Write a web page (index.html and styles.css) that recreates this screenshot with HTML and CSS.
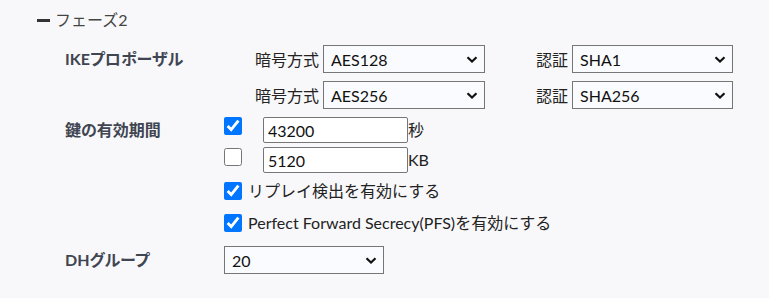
FILE: index.html
```html
<!DOCTYPE html>
<html lang="ja">
<head>
    <meta charset="UTF-8">
    <meta name="viewport" content="width=device-width, initial-scale=1.0">
    <title>フェーズ2</title>
    <link rel="stylesheet" href="styles.css">
</head>
<body>
    <div class="phase">
        <div class="phase-title"><span class="toggle"></span>フェーズ2</div>

        <div class="field">
            <div class="field-label">IKEプロポーザル</div>
            <div class="field-body proposals">
                <div class="proposal">
                    <span class="pair-label">暗号方式</span>
                    <span class="select-wrap sel-enc">
                        <select><option>AES128</option></select>
                        <svg class="chevron" viewBox="0 0 12 7"><path d="M1.5 1.2l4.5 4.3 4.5-4.3"/></svg>
                    </span>
                    <span class="pair-label auth">認証</span>
                    <span class="select-wrap sel-auth">
                        <select><option>SHA1</option></select>
                        <svg class="chevron" viewBox="0 0 12 7"><path d="M1.5 1.2l4.5 4.3 4.5-4.3"/></svg>
                    </span>
                </div>
                <div class="proposal">
                    <span class="pair-label">暗号方式</span>
                    <span class="select-wrap sel-enc">
                        <select><option>AES256</option></select>
                        <svg class="chevron" viewBox="0 0 12 7"><path d="M1.5 1.2l4.5 4.3 4.5-4.3"/></svg>
                    </span>
                    <span class="pair-label auth">認証</span>
                    <span class="select-wrap sel-auth">
                        <select><option>SHA256</option></select>
                        <svg class="chevron" viewBox="0 0 12 7"><path d="M1.5 1.2l4.5 4.3 4.5-4.3"/></svg>
                    </span>
                </div>
            </div>
        </div>

        <div class="field lifetime">
            <div class="field-label">鍵の有効期間</div>
            <div class="field-body">
                <div class="life-row">
                    <input type="checkbox" checked>
                    <input type="text" class="life-input" value="43200">
                    <span class="unit">秒</span>
                </div>
                <div class="life-row second">
                    <input type="checkbox">
                    <input type="text" class="life-input" value="5120">
                    <span class="unit">KB</span>
                </div>
                <label class="check-row"><input type="checkbox" checked>リプレイ検出を有効にする</label>
                <label class="check-row"><input type="checkbox" checked>Perfect Forward Secrecy(PFS)を有効にする</label>
            </div>
        </div>

        <div class="field dh">
            <div class="field-label">DHグループ</div>
            <div class="field-body">
                <span class="select-wrap sel-dh">
                    <select><option>20</option></select>
                    <svg class="chevron" viewBox="0 0 12 7"><path d="M1.5 1.2l4.5 4.3 4.5-4.3"/></svg>
                </span>
            </div>
        </div>
    </div>
</body>
</html>
```

FILE: styles.css
```css
body {
    margin: 0;
    background-color: #f8f8fa;
    font-family: Lato, "Noto Sans CJK JP", sans-serif;
    font-size: 16px;
    color: #222;
}

.phase {
    padding-top: 8px;
}

.phase-title {
    display: flex;
    align-items: center;
    padding-left: 37px;
    line-height: 24px;
    color: #444;
}

.toggle {
    width: 13px;
    height: 3px;
    margin-right: 5px;
    background-color: #333;
}

.field {
    display: grid;
    grid-template-columns: 159px 1fr;
    padding-left: 65px;
    margin-top: 13px;
}

.field-label {
    font-weight: bold;
    color: #404552;
    line-height: 28px;
    font-feature-settings: "palt";
}

.proposals {
    padding-left: 31px;
    display: flex;
    flex-direction: column;
    gap: 8px;
}

.proposal {
    display: flex;
    align-items: center;
}

.pair-label {
    margin-right: 4px;
}

.pair-label.auth {
    margin-left: 51px;
}

/* select with a drawn chevron */
.select-wrap {
    position: relative;
    display: inline-block;
    height: 28px;
}

.select-wrap select {
    appearance: none;
    -webkit-appearance: none;
    box-sizing: border-box;
    width: 100%;
    height: 28px;
    margin: 0;
    padding: 0 24px 0 7px;
    font-family: Lato, "Noto Sans CJK JP", sans-serif;
    font-size: 16px;
    border: 1px solid #767676;
    border-radius: 0;
    background-color: #fafbfe;
    color: #111;
}

.chevron {
    position: absolute;
    right: 7px;
    top: 11px;
    width: 12px;
    height: 7px;
    fill: none;
    stroke: #111;
    stroke-width: 2.2;
    pointer-events: none;
}

.sel-enc {
    width: 162px;
}

.sel-auth {
    width: 161px;
}

.sel-dh {
    width: 160px;
}

.lifetime {
    margin-top: 8px;
}

.lifetime .field-label {
    line-height: 26px;
}

.life-row {
    display: flex;
    align-items: flex-start;
}

.life-row.second {
    margin-top: 4px;
}

.life-row.second input[type="checkbox"] {
    margin-top: 1px;
}

input[type="checkbox"] {
    width: 18px;
    height: 18px;
    margin: 0;
}

.life-input {
    box-sizing: border-box;
    width: 145px;
    height: 26px;
    margin: 0 0 0 21px;
    padding: 0 4px;
    font-family: Lato, "Noto Sans CJK JP", sans-serif;
    font-size: 16px;
    border: 1px solid #767676;
    border-radius: 2px;
    background-color: #fff;
    color: #111;
}

.unit {
    line-height: 26px;
}

.check-row {
    display: flex;
    align-items: center;
    gap: 6px;
    line-height: 24px;
    margin-top: 6px;
}

.check-row + .check-row {
    margin-top: 8px;
}

.dh {
    margin-top: 11px;
}
```
